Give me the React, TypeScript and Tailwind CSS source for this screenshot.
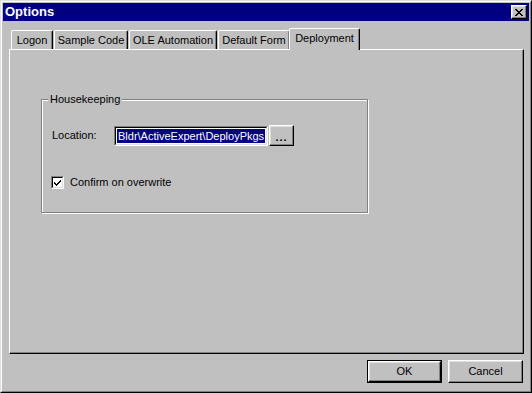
import { ReactElement } from "react";

const raised =
  "border border-t-white border-l-white border-r-black border-b-black shadow-[inset_-1px_-1px_0_#808080,inset_1px_1px_0_#dfdfdf]";

function Sunken({ className, children }: { className: string; children?: React.ReactNode }): ReactElement {
  return (
    <div className={`border border-t-[#808080] border-l-[#808080] border-r-white border-b-white ${className}`}>
      <div className="w-full h-full border border-t-black border-l-black border-r-[#dfdfdf] border-b-[#dfdfdf] bg-white">
        {children}
      </div>
    </div>
  );
}

function Tab({ label, width, selected }: { label: string; width: string; selected?: boolean }): ReactElement {
  if (selected) {
    return (
      <div
        className={`${width} h-[22px] -mb-px -ml-[2px] relative z-10 bg-[#c0c0c0] border-t border-l border-r border-t-white border-l-white border-r-black rounded-t-[2px] shadow-[inset_-1px_0_0_#808080] flex items-start justify-center pt-[3px]`}
      >
        {label}
      </div>
    );
  }
  return (
    <div
      className={`${width} h-[19px] mr-px border-t border-l border-r border-t-white border-l-white border-r-black rounded-t-[2px] shadow-[inset_-1px_0_0_#808080] flex items-start justify-center pt-[3px]`}
    >
      {label}
    </div>
  );
}

export default function App(): ReactElement {
  return (
    <div className="w-[532px] h-[393px] bg-[#c0c0c0] border border-t-[#dfdfdf] border-l-[#dfdfdf] border-r-black border-b-black font-['Liberation_Sans',Arial,sans-serif] text-[11px] leading-[13px] text-black">
      <div className="h-full border border-t-white border-l-white border-r-[#808080] border-b-[#808080] p-px flex flex-col">
        {/* title bar */}
        <div className="h-[18px] bg-[#000080] flex items-center justify-between pl-[2px] pr-[2px]">
          <span className="text-white font-bold text-[13px] leading-[16px]">Options</span>
          <div className={`w-[16px] h-[14px] bg-[#c0c0c0] flex items-center justify-center ${raised}`}>
            <svg width="8" height="7" viewBox="0 0 8 7">
              <path d="M0 0h2v1h1v1h2V1h1V0h2v1H7v1H6v1H5v1h1v1h1v1h1v1H6V6H5V5H3v1H2v1H0V6h1V5h1V4h1V3H2V2H1V1H0z" fill="black" />
            </svg>
          </div>
        </div>

        <div className="ml-[6px] mt-[7px] w-[515px] flex flex-col">
          {/* tabs */}
          <div className="h-[21px] flex items-end pl-[2px]">
            <Tab label="Logon" width="w-[42px]" />
            <Tab label="Sample Code" width="w-[74px]" />
            <Tab label="OLE Automation" width="w-[88px]" />
            <Tab label="Default Form" width="w-[72px]" />
            <Tab label="Deployment" width="w-[71px]" selected />
          </div>

          {/* panel */}
          <div className="h-[305px] border border-t-white border-l-white border-r-black border-b-black shadow-[inset_-1px_-1px_0_#808080] pl-[31px] pt-[49px]">
            <div className="relative w-[327px] h-[114px] border border-[#808080] shadow-[inset_1px_1px_0_#fff,1px_1px_0_#fff] pl-[9px] pt-[25px]">
              <span className="absolute -top-[7px] left-[6px] px-[2px] bg-[#c0c0c0]">Housekeeping</span>

              <div className="flex items-center">
                <span className="w-[62px] ml-px">Location:</span>
                <Sunken className="w-[154px] h-[20px]">
                  <div className="p-px h-full overflow-hidden">
                    <div className="h-full bg-[#000080] text-white whitespace-nowrap overflow-hidden leading-[14px] pl-px">
                      Bldr\ActiveExpert\DeployPkgs
                    </div>
                  </div>
                </Sunken>
                <div className={`ml-px w-[25px] h-[21px] flex items-end justify-center pb-[4px] ${raised}`}>
                  <span className="leading-[8px] font-bold tracking-[1px]">...</span>
                </div>
              </div>

              <div className="flex items-center mt-[30px]">
                <Sunken className="w-[13px] h-[13px]">
                  <svg width="9" height="9" viewBox="0 0 9 9" className="block">
                    <path d="M1 4h1v1h1v1h1V5h1V4h1V3h1V2h1v2H7v1H6v1H5v1H4v1H3V7H2V6H1z" fill="black" />
                    <path d="M1 5h1v1h1v1h1V6h1V5h1V4h1V3h1v1H7v1H6v1H5v1H4v1H3V7H2V6H1z" fill="black" />
                  </svg>
                </Sunken>
                <span className="ml-[6px]">Confirm on overwrite</span>
              </div>
            </div>
          </div>

          {/* buttons */}
          <div className="flex justify-end gap-[6px] mt-[6px] pr-px">
            <div className="w-[75px] h-[23px] border border-black">
              <div className={`w-full h-full flex items-center justify-center ${raised}`}>OK</div>
            </div>
            <div className={`w-[75px] h-[23px] flex items-center justify-center ${raised}`}>Cancel</div>
          </div>
        </div>
      </div>
    </div>
  );
}
